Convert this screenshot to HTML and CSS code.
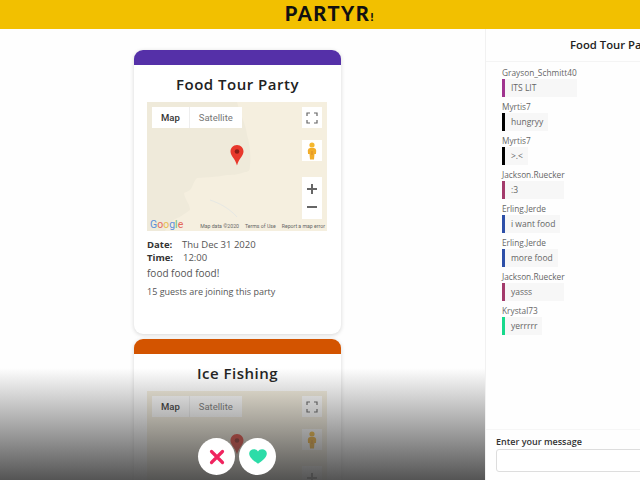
FILE: index.html
```html
<!DOCTYPE html>
<html lang="en">
<head>
<meta charset="utf-8">
<title>Partyr</title>
<link rel="stylesheet" href="styles.css">
</head>
<body>
<header class="topbar"><h1 class="logo">PARTYR<span class="bang">!</span></h1></header>
<main class="layout">
  <section class="feed">
    <article class="card">
      <div class="band band-purple"></div>
      <h2 class="card-title">Food Tour Party</h2>
      <div class="map">
        <svg class="terrain" viewBox="0 0 180 129" preserveAspectRatio="none" aria-hidden="true">
          <rect width="180" height="129" fill="#f5efdf"/>
          <path d="M0 0H90C93 12 99 22 100 33C103 42 104 56 103 63C103 68 102 70 98 70C90 73 84 73 80 73C70 75 60 75 50 76C46 80 46 85 43 88C40 90 38 90 37 91C38 98 43 102 43 108C38 112 35 113 33 115C25 117 22 123 18 129H0Z" fill="#efeada"/>
          <path d="M63 98C72 101 82 106 90 115" fill="none" stroke="#e6e8e4" stroke-width="1"/>
        </svg>
        <div class="map-type"><span class="map-btn map-btn-on">Map</span><span class="map-btn">Satellite</span></div>
        <div class="map-ctl ctl-full">
          <svg width="12" height="12" viewBox="0 0 12 12" aria-hidden="true"><path d="M1 4V1H4M8 1H11V4M11 8V11H8M4 11H1V8" fill="none" stroke="#666" stroke-width="1.2"/></svg>
        </div>
        <div class="map-ctl ctl-peg">
          <svg width="10" height="18" viewBox="0 0 10 18" aria-hidden="true"><circle cx="5" cy="3" r="2.6" fill="#f5b72e"/><path d="M.8 8.500Q1 6 3 6H7Q9 6 9.200 8.500L9 12H7.500L7 17.500H3L2.500 12H1Z" fill="#f2ad2a"/><path d="M4.300 9H5.700V13H4.300Z" fill="#e2952a"/></svg>
        </div>
        <div class="map-zoom">
          <svg width="12" height="12" viewBox="0 0 12 12" aria-hidden="true"><path d="M1 6H11M6 1V11" stroke="#666" stroke-width="2"/></svg>
          <svg width="12" height="12" viewBox="0 0 12 12" aria-hidden="true"><path d="M1 6H11" stroke="#666" stroke-width="2"/></svg>
        </div>
        <svg class="pin" width="14" height="21" viewBox="0 0 14 21" aria-hidden="true"><path d="M7 0C3 0 .5 3 .5 6.500C.5 11 5 13 7 20.500C9 13 13.500 11 13.500 6.500C13.500 3 11 0 7 0Z" fill="#e8382c"/><circle cx="7" cy="6.500" r="2.300" fill="#8c1d16"/></svg>
        <span class="google"><b class="g-b">G</b><b class="g-r">o</b><b class="g-y">o</b><b class="g-b">g</b><b class="g-g">l</b><b class="g-r">e</b></span>
        <div class="map-legal"><span>Map data ©2020</span><span>Terms of Use</span><span>Report a map error</span></div>
      </div>
      <div class="details">
        <p class="meta"><b class="meta-key">Date:</b><span>Thu Dec 31 2020</span></p>
        <p class="meta"><b class="meta-key">Time:</b><span class="meta-time">12:00</span></p>
        <p class="desc">food food food!</p>
        <p class="guests">15 guests are joining this party</p>
      </div>
    </article>
    <article class="card">
      <div class="band band-orange"></div>
      <h2 class="card-title">Ice Fishing</h2>
      <div class="map">
        <svg class="terrain" viewBox="0 0 180 129" preserveAspectRatio="none" aria-hidden="true"><rect width="180" height="129" fill="#f5efdf"/></svg>
        <div class="map-type"><span class="map-btn map-btn-on">Map</span><span class="map-btn">Satellite</span></div>
        <div class="map-ctl ctl-full">
          <svg width="12" height="12" viewBox="0 0 12 12" aria-hidden="true"><path d="M1 4V1H4M8 1H11V4M11 8V11H8M4 11H1V8" fill="none" stroke="#666" stroke-width="1.2"/></svg>
        </div>
        <div class="map-ctl ctl-peg">
          <svg width="10" height="18" viewBox="0 0 10 18" aria-hidden="true"><circle cx="5" cy="3" r="2.6" fill="#f5b72e"/><path d="M.8 8.500Q1 6 3 6H7Q9 6 9.200 8.500L9 12H7.500L7 17.500H3L2.500 12H1Z" fill="#f2ad2a"/><path d="M4.300 9H5.700V13H4.300Z" fill="#e2952a"/></svg>
        </div>
        <div class="map-zoom">
          <svg width="12" height="12" viewBox="0 0 12 12" aria-hidden="true"><path d="M1 6H11M6 1V11" stroke="#666" stroke-width="2"/></svg>
          <svg width="12" height="12" viewBox="0 0 12 12" aria-hidden="true"><path d="M1 6H11" stroke="#666" stroke-width="2"/></svg>
        </div>
        <svg class="pin" width="14" height="21" viewBox="0 0 14 21" aria-hidden="true"><path d="M7 0C3 0 .5 3 .5 6.500C.5 11 5 13 7 20.500C9 13 13.500 11 13.500 6.500C13.500 3 11 0 7 0Z" fill="#e8382c"/><circle cx="7" cy="6.500" r="2.300" fill="#8c1d16"/></svg>
      </div>
    </article>
    <div class="fade"></div>
    <div class="actions">
      <button class="round" aria-label="Skip">
        <svg width="16" height="16" viewBox="0 0 16 16" aria-hidden="true"><path d="M2.500 2.500L13.500 13.500M13.500 2.500L2.500 13.500" stroke="#f0245f" stroke-width="3.200" stroke-linecap="round"/></svg>
      </button>
      <button class="round" aria-label="Join">
        <svg width="18" height="15" viewBox="0 0 20 17" preserveAspectRatio="none" aria-hidden="true"><path d="M10 16.800C6 13.500 .2 10 .2 5C.2 2.200 2.500 .2 5.500 .2C7.500 .2 9 1.200 10 2.700C11 1.200 12.500 .2 14.500 .2C17.500 .2 19.800 2.200 19.800 5C19.800 10 14 13.500 10 16.800Z" fill="#2cdca8"/></svg>
      </button>
    </div>
  </section>
  <aside class="chat">
    <h2 class="chat-title">Food Tour Party</h2>
    <ul class="messages">
      <li class="msg"><span class="author">Grayson_Schmitt40</span><div class="bubble c-pink">ITS LIT</div></li>
      <li class="msg"><span class="author">Myrtis7</span><div class="bubble c-black">hungryy</div></li>
      <li class="msg"><span class="author">Myrtis7</span><div class="bubble c-black">&gt;.&lt;</div></li>
      <li class="msg"><span class="author">Jackson.Ruecker</span><div class="bubble c-rose wide-a">:3</div></li>
      <li class="msg"><span class="author">Erling.Jerde</span><div class="bubble c-blue">i want food</div></li>
      <li class="msg"><span class="author">Erling.Jerde</span><div class="bubble c-blue">more food</div></li>
      <li class="msg"><span class="author">Jackson.Ruecker</span><div class="bubble c-rose wide-a">yasss</div></li>
      <li class="msg"><span class="author">Krystal73</span><div class="bubble c-green">yerrrrr</div></li>
    </ul>
    <form class="composer">
      <label class="composer-label" for="m">Enter your message</label>
      <input class="composer-input" id="m" type="text">
    </form>
  </aside>
</main>
</body>
</html>
```
FILE: styles.css
```css
* { box-sizing: border-box; }
html, body { margin: 0; height: 480px; overflow: hidden; }
body { width: 741px; background: #fefefe; font-family: "Open Sans", sans-serif; color: #444; display: flex; flex-direction: column; }
p, h1, h2, ul { margin: 0; padding: 0; }

.topbar { height: 29px; flex: none; background: #f2c000; display: flex; align-items: center; justify-content: center; padding-right: 81px; }
.logo { font-family: Lato, sans-serif; font-weight: 900; font-size: 20px; line-height: 29px; letter-spacing: 1.5px; color: #111; }
.bang { font-size: 12px; }

.layout { flex: 1; display: flex; min-height: 0; }
.feed { position: relative; width: 485px; flex: none; height: 451px; overflow: hidden; display: flex; flex-direction: column; align-items: center; gap: 5px; padding: 21px 10px 0 0; }

.card { flex: none; width: 207px; height: 284px; background: #fff; border-radius: 9px; box-shadow: 0 1px 4px rgba(0,0,0,.16); overflow: hidden; }
.band { height: 15px; }
.band-purple { background: #5530a8; }
.band-orange { background: #d35400; }
.card-title { font-size: 15px; line-height: 22px; font-weight: 600; color: #222; text-align: center; letter-spacing: .5px; margin: 8px 0 0; height: 29px; }

.map { position: relative; width: 180px; height: 129px; margin: 0 0 0 13px; overflow: hidden; font-family: Roboto, sans-serif; }
.terrain { display: block; width: 100%; height: 100%; }
.map-type { position: absolute; left: 5px; top: 5px; height: 21px; display: flex; background: #fff; }
.map-btn { font-size: 9.500px; line-height: 21px; padding: 0 9px; color: #777; }
.map-btn-on { font-weight: 500; color: #333; border-right: 1px solid #eee; }
.map-ctl { position: absolute; right: 5px; width: 20px; height: 21px; background: #fff; display: flex; align-items: center; justify-content: center; }
.ctl-full { top: 5px; }
.ctl-peg { top: 38px; }
.map-zoom { position: absolute; right: 5px; top: 75px; width: 20px; height: 42px; background: #fff; display: flex; flex-direction: column; align-items: center; justify-content: space-evenly; }
.pin { position: absolute; left: 83px; top: 43px; }
.google { position: absolute; left: 3px; top: 117px; font-size: 10.500px; line-height: 12px; }
.google b { font-weight: 400; }
.g-b { color: #5b8fd9; }
.g-r { color: #e4685a; }
.g-y { color: #e9bd4f; }
.g-g { color: #6dbb76; }
.map-legal { position: absolute; right: 2px; bottom: 1px; display: flex; gap: 6px; font-size: 5.200px; line-height: 8px; color: #666; }

.details { padding: 7px 13px 0; font-size: 9.500px; line-height: 13px; color: #555; }
.meta { display: flex; }
.meta-key { width: 35px; font-weight: 700; color: #333; }
.meta-time { margin-left: 1px; }
.desc { margin-top: 2px; font-size: 10px; line-height: 14px; }
.guests { margin-top: 5px; font-size: 9px; line-height: 13px; }

.fade { position: absolute; left: 0; right: 0; top: 339px; height: 112px; background: linear-gradient(to bottom, rgba(70,70,70,0), rgba(70,70,70,.92)); }
.actions { position: absolute; left: 198px; top: 409px; display: flex; gap: 4px; }
.round { width: 37px; height: 37px; padding: 0; border: 0; border-radius: 50%; background: #fff; display: flex; align-items: center; justify-content: center; }

.chat { width: 256px; flex: none; border-left: 1px solid #f1f1f1; display: flex; flex-direction: column; height: 451px; }
.chat-title { height: 33px; flex: none; font-size: 11.300px; font-weight: 600; line-height: 31px; text-align: center; color: #222; border-bottom: 1px solid #f4f4f4; }
.messages { list-style: none; flex: 1; padding: 5px 0 0 16px; }
.msg { height: 34px; font-size: 8.300px; line-height: 12px; color: #666; }
.author { display: block; height: 12px; }
.bubble { display: inline-block; height: 18px; line-height: 18px; padding: 0 5px 0 6px; background: #f7f7f7; border-left: 3px solid #000; color: #666; font-size: 8.500px; }
.c-pink { border-left-color: #a0348f; width: 75px; }
.c-black { border-left-color: #000; }
.c-rose { border-left-color: #a33a6b; }
.c-blue { border-left-color: #2d4fa8; }
.c-green { border-left-color: #17d98c; }
.wide-a { width: 62px; }
.composer { flex: none; padding: 0 0 0 10px; height: 51px; border-top: 1px solid #f6f6f6; }
.composer-label { display: block; font-size: 9px; font-weight: 600; line-height: 12px; color: #333; margin-top: 6px; }
.composer-input { display: block; width: 236px; height: 23px; margin-top: 1px; border: 1px solid #ddd; border-radius: 3px; background: #fff; }
```
